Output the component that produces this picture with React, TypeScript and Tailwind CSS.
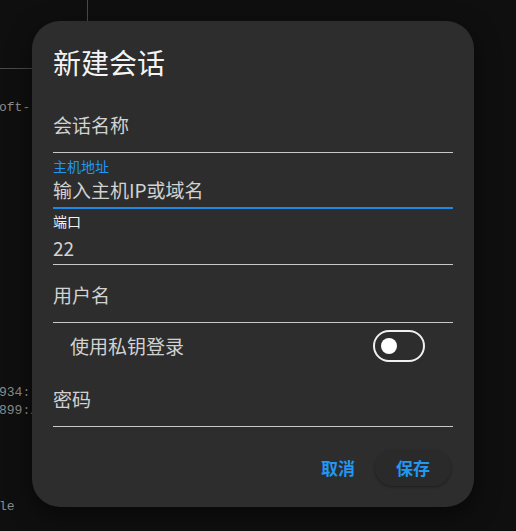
import React, { useState } from 'react';

const CJK = "font-['Noto_Sans_CJK_SC','Noto_Sans',sans-serif]";

// background terminal lines (mostly covered by the dialog)
const TERM_LINES: { text: string; mt: string }[] = [
  { text: 'oft-', mt: 'mt-[30px]' },
  { text: '934:', mt: 'mt-[267px]' },
  { text: '899:/', mt: 'mt-0' },
  { text: 'le', mt: 'mt-[78px]' },
];

interface FieldProps {
  label?: string;
  value: string;
  focused?: boolean;
  dim?: boolean;
}

const Field: React.FC<FieldProps> = ({ label, value, focused, dim }) => {
  if (!label) {
    return (
      <div className="border-b border-[#c9c9c9] pb-[13px]">
        <div className={`h-[28px] leading-[28px] text-[19px] ${dim ? 'text-[#d2d2d2]' : 'text-[#e6e6e6]'}`}>{value}</div>
      </div>
    );
  }
  return (
    <div className={focused ? 'border-b-2 border-[#1e88e5] pb-[3px]' : 'border-b border-[#c9c9c9] pb-[2px]'}>
      <div className={`h-[16px] leading-[16px] text-[14px] ${focused ? 'text-[#2196f3]' : 'text-[#f2f2f2]'}`}>{label}</div>
      <div className={`h-[28px] leading-[28px] text-[19px] text-[#d2d2d2] ${focused ? 'mt-[2px]' : 'mt-[5px]'}`}>{value}</div>
    </div>
  );
};

export default function App() {
  const [useKey, setUseKey] = useState(false);

  return (
    <div className={`relative w-[516px] h-[531px] overflow-hidden bg-[#0f0f0f] ${CJK}`}>
      {/* background app */}
      <div className="flex">
        <div className="w-[88px] h-[69px] border-r border-b border-[#4a4a4a]" />
      </div>
      <div className="w-[32px] overflow-hidden font-['Liberation_Mono',monospace] text-[13px] leading-[18px] text-[#8c8c8c]">
        {TERM_LINES.map((l, i) => (
          <div key={i} className={`${l.mt} -ml-[1px] whitespace-nowrap`}>
            {l.text}
          </div>
        ))}
      </div>

      {/* dialog */}
      <div className="absolute left-[32px] top-[21px] w-[442px] rounded-[28px] bg-[#2d2d2d] px-[21px] pt-[23px] pb-[21px] shadow-[0_8px_24px_rgba(0,0,0,0.5)]">
        <div className="h-[36px] leading-[36px] text-[28px] text-[#f4f4f4]">新建会话</div>

        <div className="mt-[31px]">
          <Field value="会话名称" dim />
        </div>
        <div className="mt-[5px]">
          <Field label="主机地址" value="输入主机IP或域名" focused />
        </div>
        <div className="mt-[4px]">
          <Field label="端口" value="22" />
        </div>
        <div className="mt-[16px]">
          <Field value="用户名" dim />
        </div>

        <div className="mt-[7px] flex h-[32px] items-center justify-between pl-[17px] pr-[28px]">
          <span className="text-[19px] text-[#d2d2d2]">使用私钥登录</span>
          <button
            onClick={() => setUseKey(v => !v)}
            className={`flex h-[32px] w-[52px] items-center rounded-full border-2 border-[#f0f0f0] px-[6px] ${useKey ? 'justify-end' : 'justify-start'}`}
          >
            <span className="block h-[16px] w-[16px] rounded-full bg-white" />
          </button>
        </div>

        <div className="mt-[23px]">
          <Field value="密码" dim />
        </div>

        <div className="mt-[23px] mr-[2px] flex items-center justify-end gap-[12px]">
          <button className="h-[36px] px-[8px] text-[17px] font-semibold text-[#2196f3]">取消</button>
          <button className="h-[36px] rounded-full bg-[#2a2a2a] px-[21px] text-[17px] font-semibold text-[#2196f3] shadow-[0_1px_3px_rgba(0,0,0,0.35)]">保存</button>
        </div>
      </div>
    </div>
  );
}
